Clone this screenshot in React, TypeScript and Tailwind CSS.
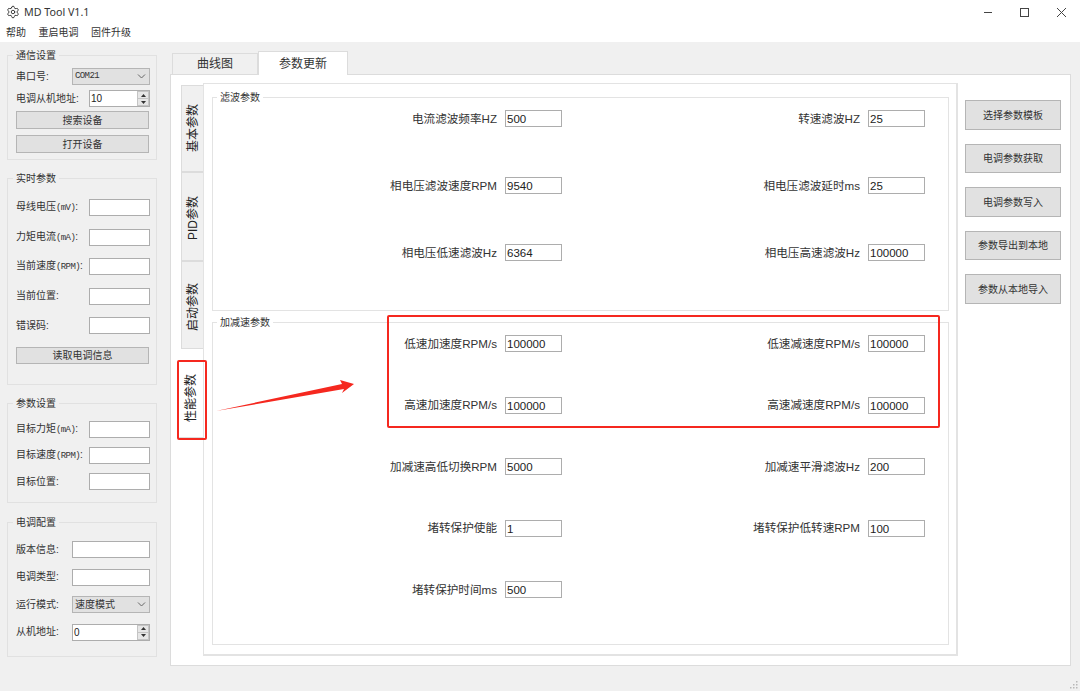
import React from 'react';
import { Settings } from 'lucide-react';

const cjk = 'font-["Liberation_Sans","Noto_Sans_CJK_SC",sans-serif]';
const mono = 'font-["Liberation_Mono",monospace] text-[9px] tracking-[-0.6px]';

// Sidebar group box with its caption sitting on the top border
function GroupBox({ title, className, children }: { title: string; className: string; children: React.ReactNode }) {
  return (
    <div className={`relative w-[150px] border border-[#e1e1e1] flex flex-col pl-[8px] pr-[6px] ${className}`}>
      <span className="absolute left-[5px] top-[-7px] bg-[#f0f0f0] px-[3px] text-[10px] leading-[14px] text-[#333]">{title}</span>
      {children}
    </div>
  );
}

function SideLabel({ text, unit }: { text: string; unit?: string }) {
  return (
    <span className="text-[10px] leading-[16px] text-[#333] whitespace-nowrap">
      {text}
      {unit && <span className={mono}>{unit}</span>}:
    </span>
  );
}

function SideInput({ label, unit, wide }: { label: string; unit?: string; wide?: boolean }) {
  return (
    <div className="flex items-center justify-between h-[17px]">
      <SideLabel text={label} unit={unit} />
      <div className={`h-[17px] bg-white border border-[#adadad] ${wide ? 'w-[78px]' : 'w-[61px]'}`} />
    </div>
  );
}

function Combo({ label, value, isMono }: { label: string; value: string; isMono?: boolean }) {
  return (
    <div className="flex items-center justify-between h-[17px]">
      <SideLabel text={label} />
      <div className="w-[78px] h-[17px] bg-[#e1e1e1] border border-[#b5b5b5] flex items-center justify-between pl-[2px] pr-[3px]">
        <span className={isMono ? `${mono} text-[#333]` : 'text-[10px] text-[#333]'}>{value}</span>
        <svg width="9" height="5" viewBox="0 0 9 5" fill="none" stroke="#666" strokeWidth="1">
          <path d="M1 0.5 L4.5 4 L8 0.5" />
        </svg>
      </div>
    </div>
  );
}

function Spin({ label, value, wide }: { label: string; value: string; wide?: boolean }) {
  return (
    <div className="flex items-center justify-between h-[17px]">
      <SideLabel text={label} />
      <div className={`h-[17px] bg-white border border-[#adadad] flex items-center justify-between ${wide ? 'w-[78px]' : 'w-[61px]'}`}>
        <span className="pl-[1px] text-[10px] text-[#222]">{value}</span>
        <div className="w-[12px] h-full flex flex-col border border-[#c4c4c4] bg-[#e6e6e6]">
          <div className="flex-1 border-b border-[#c4c4c4] flex items-center justify-center">
            <svg width="5" height="3" viewBox="0 0 5 3" fill="#333"><path d="M2.5 0 L5 3 L0 3 Z" /></svg>
          </div>
          <div className="flex-1 flex items-center justify-center">
            <svg width="5" height="3" viewBox="0 0 5 3" fill="#333"><path d="M0 0 L5 0 L2.5 3 Z" /></svg>
          </div>
        </div>
      </div>
    </div>
  );
}

function SideButton({ text, className = '' }: { text: string; className?: string }) {
  return (
    <div className={`w-[133px] bg-[#e1e1e1] border border-[#b5b5b5] flex items-center justify-center text-[10px] text-[#333] ${className}`}>
      {text}
    </div>
  );
}

function Field({ label, value }: { label: string; value: string }) {
  return (
    <div className="flex items-center justify-end gap-[8px] h-[17px]">
      <span className="text-[11.6px] text-[#333] whitespace-nowrap">{label}</span>
      <div className="w-[57px] h-[17px] bg-white border border-[#adadad] pl-[1px] text-[11.5px] leading-[16px] text-[#222]">{value}</div>
    </div>
  );
}

function ParamGroup({ title, className, children }: { title: string; className: string; children: React.ReactNode }) {
  return (
    <div className={`relative w-[737px] border border-[#e3e3e3] grid grid-cols-[349px_363px] ${className}`}>
      <span className="absolute left-[4px] top-[-7px] bg-white px-[3px] text-[10px] leading-[14px] text-[#333]">{title}</span>
      {children}
    </div>
  );
}

function VerticalTab({ text, active, className = '' }: { text: string; active?: boolean; className?: string }) {
  return (
    <div
      className={`flex items-center justify-center border-b border-[#dcdcdc] ${
        active ? 'w-[24px] bg-white' : 'w-[22px] bg-[#f0f0f0] border-l border-t'
      } ${className}`}
    >
      <span className="[writing-mode:vertical-rl] [text-orientation:sideways] rotate-180 text-[12px] leading-[14px] text-[#222] whitespace-nowrap">{text}</span>
    </div>
  );
}

const actionButtons = [
  { text: '选择参数模板', cls: 'h-[30px]' },
  { text: '电调参数获取', cls: 'h-[29px]' },
  { text: '电调参数写入', cls: 'h-[30px]' },
  { text: '参数导出到本地', cls: 'h-[29px]' },
  { text: '参数从本地导入', cls: 'h-[30px]' },
];

export default function App() {
  return (
    <div className={`relative w-[1080px] h-[691px] overflow-hidden bg-[#f0f0f0] flex flex-col ${cjk}`}>
      {/* Title bar */}
      <div className="h-[22px] bg-white flex items-center justify-between shrink-0">
        <div className="flex items-center pt-[2px]">
          <Settings size={14} strokeWidth={1.6} className="ml-[6px] text-[#333]" />
          <span className='ml-[4px] font-["Noto_Sans",sans-serif] text-[10.7px] text-[#333]'>MD Tool V1.1</span>
        </div>
        <div className="flex items-center gap-[26px] pr-[13px] pt-[2px]">
          <svg width="11" height="11" viewBox="0 0 11 11" stroke="#444" fill="none"><path d="M2 5.5 H10" /></svg>
          <svg width="11" height="11" viewBox="0 0 11 11" stroke="#444" fill="none"><rect x="1.5" y="1.5" width="8" height="8" /></svg>
          <svg width="11" height="11" viewBox="0 0 11 11" stroke="#444" fill="none"><path d="M1 1 L10 10 M10 1 L1 10" /></svg>
        </div>
      </div>

      {/* Menu */}
      <div className="h-[20px] bg-white flex items-center gap-[12.5px] pl-[6px] text-[10px] text-[#333] shrink-0">
        <span>帮助</span>
        <span>重启电调</span>
        <span>固件升级</span>
      </div>

      <div className="flex flex-1">
        {/* Left panel */}
        <div className="w-[170px] shrink-0 pl-[7px] pt-[13px] flex flex-col">
          <GroupBox title="通信设置" className="h-[105px] pt-[12px]">
            <Combo label="串口号" value="COM21" isMono />
            <div className="mt-[5px]">
              <Spin label="电调从机地址" value="10" />
            </div>
            <SideButton text="搜索设备" className="h-[18px] mt-[4px]" />
            <SideButton text="打开设备" className="h-[18px] mt-[6px]" />
          </GroupBox>
          <GroupBox title="实时参数" className="h-[207px] mt-[18px] pt-[20px] gap-[12.5px]">
            <SideInput label="母线电压" unit="(mV)" />
            <SideInput label="力矩电流" unit="(mA)" />
            <SideInput label="当前速度" unit="(RPM)" />
            <SideInput label="当前位置" />
            <SideInput label="错误码" />
            <SideButton text="读取电调信息" className="h-[17px]" />
          </GroupBox>
          <GroupBox title="参数设置" className="h-[100px] mt-[18px] pt-[17px] gap-[9px]">
            <SideInput label="目标力矩" unit="(mA)" />
            <SideInput label="目标速度" unit="(RPM)" />
            <SideInput label="目标位置" />
          </GroupBox>
          <GroupBox title="电调配置" className="h-[135px] mt-[19px] pt-[18px] gap-[10.5px]">
            <SideInput label="版本信息" wide />
            <SideInput label="电调类型" wide />
            <Combo label="运行模式" value="速度模式" />
            <Spin label="从机地址" value="0" wide />
          </GroupBox>
        </div>

        {/* Main tabs */}
        <div className="flex flex-col pt-[9px]">
          <div className="h-[23px] flex items-end pl-[2px]">
            <div className="w-[86px] h-[21px] bg-[#f0f0f0] border border-b-0 border-[#dcdcdc] flex items-center justify-center text-[12px] text-[#333]">曲线图</div>
            <div className="relative z-10 w-[90px] h-[24px] -mb-[1px] bg-white border border-b-0 border-[#dcdcdc] flex items-center justify-center text-[12px] text-[#333]">参数更新</div>
          </div>
          <div className="w-[901px] h-[592px] bg-white border border-[#dcdcdc] flex pl-[8px] pt-[8px]">
            {/* Vertical tabs */}
            <div className="w-[24px] flex flex-col items-end pt-[2px]">
              <VerticalTab text="基本参数" className="h-[87px]" />
              <VerticalTab text="PID参数" className="h-[89px] pt-[4px]" />
              <VerticalTab text="启动参数" className="h-[88px] pt-[4px]" />
              <VerticalTab text="性能参数" active className="h-[89px] pt-[10px]" />
            </div>

            {/* Parameter pages */}
            <div className="w-[755px] h-[573px] border border-[#e3e3e3] border-r-2 border-b-2 pl-[8px] pt-[13px] flex flex-col">
              <ParamGroup title="滤波参数" className="h-[214px] pt-[12px] gap-y-[50px] content-start">
                <Field label="电流滤波频率HZ" value="500" />
                <Field label="转速滤波HZ" value="25" />
                <Field label="相电压滤波速度RPM" value="9540" />
                <Field label="相电压滤波延时ms" value="25" />
                <Field label="相电压低速滤波Hz" value="6364" />
                <Field label="相电压高速滤波Hz" value="100000" />
              </ParamGroup>
              <ParamGroup title="加减速参数" className="h-[323px] mt-[11px] pt-[12px] gap-y-[44.5px] content-start">
                <Field label="低速加速度RPM/s" value="100000" />
                <Field label="低速减速度RPM/s" value="100000" />
                <Field label="高速加速度RPM/s" value="100000" />
                <Field label="高速减速度RPM/s" value="100000" />
                <Field label="加减速高低切换RPM" value="5000" />
                <Field label="加减速平滑滤波Hz" value="200" />
                <Field label="堵转保护使能" value="1" />
                <Field label="堵转保护低转速RPM" value="100" />
                <Field label="堵转保护时间ms" value="500" />
              </ParamGroup>
            </div>

            {/* Action buttons */}
            <div className="ml-[7px] pt-[17px] flex flex-col gap-[14px]">
              {actionButtons.map((b) => (
                <div
                  key={b.text}
                  className={`w-[96px] bg-[#e1e1e1] border border-[#b5b5b5] flex items-center justify-center text-[10px] text-[#333] ${b.cls}`}
                >
                  {b.text}
                </div>
              ))}
            </div>
          </div>
        </div>
      </div>

      {/* Size grip */}
      <svg className="absolute right-[2px] bottom-[2px]" width="8" height="8" viewBox="0 0 8 8" fill="#b8b8b8">
        <rect x="6" y="0" width="1.5" height="1.5" />
        <rect x="6" y="3" width="1.5" height="1.5" />
        <rect x="3" y="3" width="1.5" height="1.5" />
        <rect x="6" y="6" width="1.5" height="1.5" />
        <rect x="3" y="6" width="1.5" height="1.5" />
        <rect x="0" y="6" width="1.5" height="1.5" />
      </svg>

      {/* Red annotations over the screenshot */}
      <div className="absolute left-[177px] top-[360px] w-[30px] h-[80px] border-2 border-[#f5281f] rounded-[2px]" />
      <div className="absolute left-[387px] top-[315px] w-[553px] h-[113px] border-2 border-[#f5281f] rounded-[2px]" />
      <svg className="absolute left-[210px] top-[375px]" width="150" height="40" viewBox="0 0 150 40" fill="#f5281f">
        <polygon points="6,36 132,9 130,5 144,9 132,18 134,14" />
      </svg>
    </div>
  );
}
